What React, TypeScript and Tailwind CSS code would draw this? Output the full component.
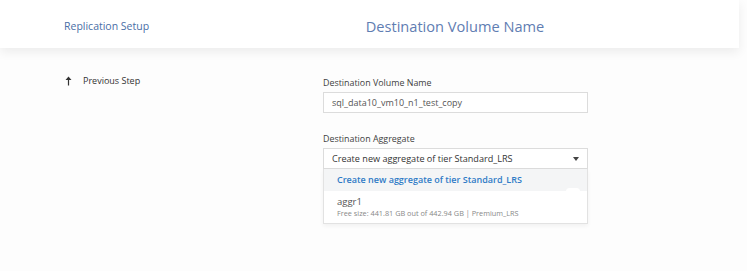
export default function App() {
  return (
    <div className="w-[747px] h-[271px] bg-[#fdfdfd] overflow-hidden font-['Open_Sans',sans-serif]">
      {/* header */}
      <div className="w-[739px] h-[48px] bg-white flex items-center pt-[5px] shadow-[0_4px_10px_rgba(0,0,0,0.07)] relative">
        <div className="pl-[64px] w-[320px] text-[10.5px] text-[#4a6ea6]">Replication Setup</div>
        <div className="flex-1 text-center pr-[149px] text-[14.6px] text-[#5f7db2]">
          Destination Volume Name
        </div>
      </div>

      <div className="flex items-start">
        <div className="w-[323px] shrink-0 pl-[64px] pt-[25px] flex items-center">
          <svg width="7" height="10" viewBox="0 0 7 10" className="mr-[11px] ml-[1px]">
            <path d="M3.5 0.5 L6.5 4 L4.1 4 L4.1 9.5 L2.9 9.5 L2.9 4 L0.5 4 Z" fill="#333" />
          </svg>
          <span className="text-[9px] leading-[16px] text-[#333]">Previous Step</span>
        </div>

        <div className="pt-[28px] w-[265px]">
          <div className="text-[8.9px] leading-[14px] text-[#3f3f3f] mb-[2px]">Destination Volume Name</div>
          <div className="h-[21px] border border-[#dcdcdc] bg-white flex items-center pl-[8px] text-[9px] text-[#555]">
            sql_data10_vm10_n1_test_copy
          </div>

          <div className="mt-[19px] text-[8.9px] leading-[14px] text-[#3f3f3f] mb-[2px]">Destination Aggregate</div>
          <div className="h-[21px] border border-[#dcdcdc] bg-white flex items-center justify-between pl-[8px] pr-[8px] text-[9.1px] text-[#333]">
            <span>Create new aggregate of tier Standard_LRS</span>
            <svg width="6" height="4" viewBox="0 0 6 4">
              <path d="M0 0 L6 0 L3 4 Z" fill="#444" />
            </svg>
          </div>

          <div className="border border-t-0 border-[#e2e2e2] bg-white shadow-[0_2px_4px_rgba(0,0,0,0.05)] relative">
            <div className="h-[22px] bg-[#f4f5f6] flex items-center pl-[13px] text-[9px] font-semibold text-[#2f7bc6]">
              Create new aggregate of tier Standard_LRS
            </div>
            <div className="h-[32px] pl-[13px] flex flex-col justify-center">
              <div className="text-[9.5px] leading-[12px] text-[#555]">aggr1</div>
              <div className="text-[7.3px] leading-[11px] text-[#888]">Free size: 441.81 GB out of 442.94 GB | Premium_LRS</div>
            </div>
            <div className="absolute left-[242px] top-[19px] w-[14px] h-[7px] bg-white rounded-sm" />
          </div>
        </div>
      </div>
    </div>
  );
}
